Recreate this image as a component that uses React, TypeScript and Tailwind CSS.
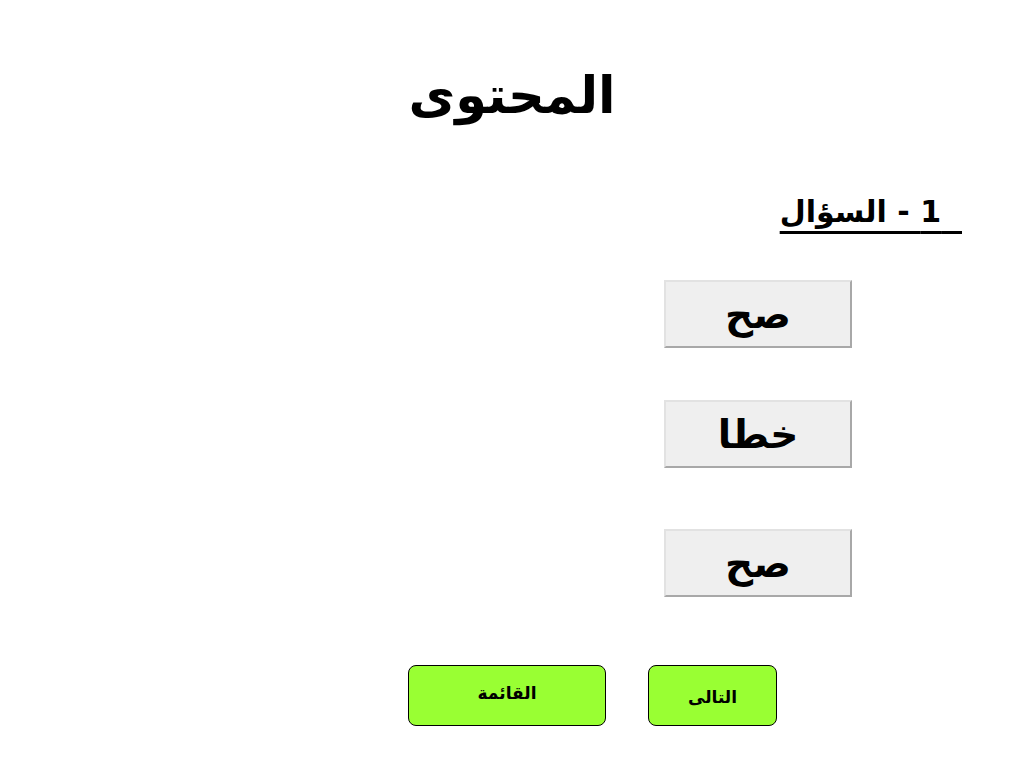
import React from "react";

const options = [
  { label: "صح", mt: "mt-[46px]" },
  { label: "خطا", mt: "mt-[52px]" },
  { label: "صح", mt: "mt-[61px]" },
];

const App = () => {
  return (
    <div
      dir="rtl"
      className="w-[1024px] h-[768px] bg-white text-black font-['DejaVu_Sans',sans-serif] flex flex-col"
    >
      <h1 className="mt-[60px] h-[72px] text-center text-[51px] font-bold leading-[72px]">
        المحتوى
      </h1>

      <div className="mt-[58px] pr-[62px] flex">
        <span className="text-[30px] font-bold leading-[44px] underline decoration-[3px] underline-offset-[9px] [text-decoration-skip-ink:none]">
          {"\u00A0\u00A01 - السؤال"}
        </span>
      </div>

      <div className="pr-[172px] flex flex-col items-start">
        {options.map((o, i) => (
          <button
            key={i}
            className={`${o.mt} w-[188px] h-[68px] bg-[#efefef] border-[2px] border-t-[#e2e2e2] border-r-[#a8a8a8] border-b-[#a8a8a8] border-l-[#e2e2e2] text-[39px] font-bold leading-none flex items-center justify-center`}
          >
            {o.label}
          </button>
        ))}
      </div>

      <div className="mt-[68px] pr-[247px] flex gap-[42px]">
        <button className="w-[129px] h-[61px] bg-[#99ff33] border border-black rounded-[8px] text-[17px] font-bold flex items-center justify-center pt-[4px]">
          التالى
        </button>
        <button className="w-[198px] h-[61px] bg-[#99ff33] border border-black rounded-[8px] text-[17px] font-bold flex items-center justify-center pb-[4px]">
          القائمة
        </button>
      </div>
    </div>
  );
};

export default App;
